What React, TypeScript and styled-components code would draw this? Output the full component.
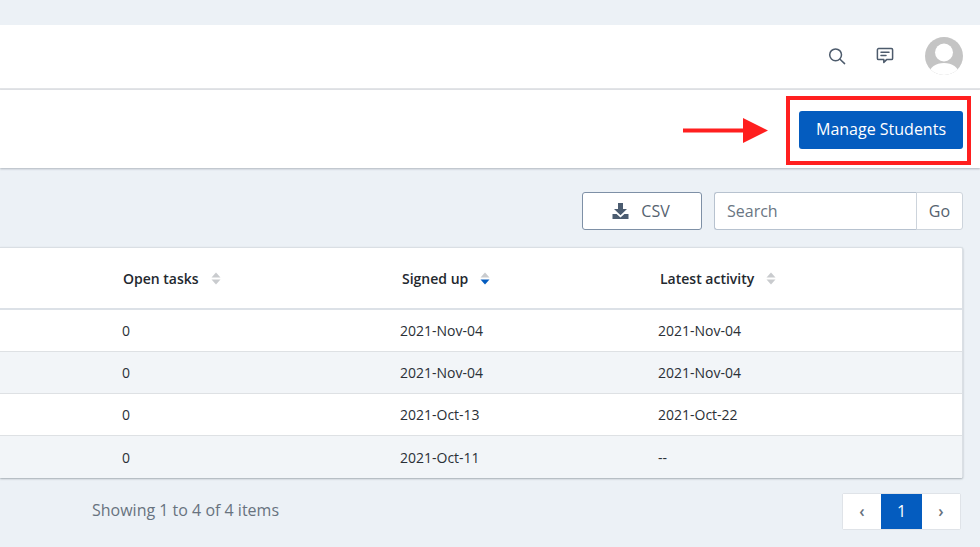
import React from 'react';
import styled, { createGlobalStyle } from 'styled-components';

const GlobalStyle = createGlobalStyle`
  html, body {
    margin: 0;
    padding: 0;
    height: 547px;
    overflow: hidden;
    background: #ecf1f6;
    font-family: 'Open Sans', 'Liberation Sans', sans-serif;
    -webkit-font-smoothing: antialiased;
  }
  * { box-sizing: border-box; }
`;

const Page = styled.div`
  width: 980px;
  height: 547px;
  padding-top: 25px;
  position: relative;
  overflow: hidden;
`;

const TopBar = styled.header`
  height: 65px;
  background: #fff;
  border-bottom: 2px solid #e2e4e7;
  display: flex;
  align-items: center;
  justify-content: flex-end;
  padding: 0 17px 2px 0;
`;

const IconButton = styled.span`
  display: flex;
  width: 20px;
  height: 20px;
  margin-right: 28px;
  color: #4d5b6c;
`;

const Avatar = styled.span`
  display: block;
  width: 38px;
  height: 38px;
  border-radius: 50%;
  overflow: hidden;
  margin-left: 2px;
`;

const ActionBar = styled.div`
  height: 78px;
  background: #fff;
  box-shadow: 0 1px 2px rgba(60, 70, 80, 0.35);
  display: flex;
  align-items: center;
  justify-content: flex-end;
  padding: 2px 17px 0 0;
`;

const ManageButton = styled.button`
  width: 164px;
  height: 38px;
  border: 0;
  border-radius: 3px;
  background: #045cbf;
  color: #fff;
  font: 500 16px 'Open Sans', sans-serif;
  padding: 0 0 3px;
`;

const Highlight = styled.div`
  position: absolute;
  left: 786px;
  top: 96px;
  width: 185px;
  height: 69px;
  border: 4px solid #ff1f1f;
`;

const Arrow = styled.svg`
  position: absolute;
  left: 683px;
  top: 117px;
`;

const Toolbar = styled.div`
  display: flex;
  justify-content: flex-end;
  padding: 24px 17px 17px 0;
`;

const CsvButton = styled.button`
  width: 120px;
  height: 38px;
  margin-right: 12px;
  background: #fff;
  border: 1px solid #7e90a6;
  border-radius: 3px;
  color: #55626f;
  font: 400 16px 'Open Sans', sans-serif;
  display: flex;
  align-items: center;
  justify-content: center;
  gap: 12px;
  padding: 0 2px 0 0;
`;

const SearchGroup = styled.div`
  display: flex;
  height: 38px;
`;

const SearchInput = styled.input`
  width: 203px;
  height: 38px;
  border: 1px solid #b7c2cf;
  border-right: 0;
  border-radius: 3px 0 0 3px;
  background: #fff;
  padding: 0 12px;
  font: 400 16px 'Open Sans', sans-serif;
  outline: none;

  &::placeholder {
    color: #6a7683;
    opacity: 1;
  }
`;

const GoButton = styled.button`
  width: 47px;
  height: 38px;
  margin-left: -1px;
  background: #fff;
  border: 1px solid #cdd4dc;
  border-radius: 0 3px 3px 0;
  color: #55626f;
  font: 400 16px 'Open Sans', sans-serif;
  padding: 0;
`;

const TableCard = styled.div`
  width: 963px;
  background: #fff;
  border-top: 1px solid #dadfe4;
  border-right: 1px solid #dadfe4;
  border-radius: 0 2px 2px 0;
  box-shadow: 0 1px 2px rgba(60, 70, 80, 0.4);
`;

const columns = 'grid-template-columns: 122px 278px 258px 1fr;';

const HeadRow = styled.div`
  display: grid;
  ${columns}
  height: 62px;
  align-items: center;
  border-bottom: 2px solid #dce1e7;
`;

const HeadCell = styled.div<{ $first?: boolean }>`
  display: flex;
  align-items: center;
  gap: 12px;
  padding-left: ${p => (p.$first ? '1px' : '2px')};
  font-size: 14px;
  font-weight: 600;
  color: #23282e;
  white-space: nowrap;
`;

const Row = styled.div<{ $striped?: boolean; $last?: boolean }>`
  display: grid;
  ${columns}
  height: 42px;
  align-items: center;
  font-size: 14px;
  color: #2a3036;
  background: ${p => (p.$striped ? '#f2f5f8' : '#fff')};
  border-bottom: ${p => (p.$last ? '0' : '1px solid #dee1e4')};
`;

const Footer = styled.div`
  display: flex;
  align-items: center;
  justify-content: space-between;
  padding: 15px 19px 0 92px;
`;

const Summary = styled.span`
  font-size: 16px;
  color: #68737f;
  padding-bottom: 3px;
`;

const Pager = styled.div`
  display: flex;
  height: 37px;
  border: 1px solid #dfe3e8;
  border-radius: 2px;
  background: #fff;
`;

const PagerItem = styled.span<{ $active?: boolean }>`
  display: flex;
  align-items: center;
  justify-content: center;
  width: ${p => (p.$active ? '41px' : '38px')};
  background: ${p => (p.$active ? '#045cbf' : '#fff')};
  color: ${p => (p.$active ? '#fff' : '#66717d')};
  font-size: 16px;
  font-weight: ${p => (p.$active ? 500 : 600)};
  padding-bottom: 2px;
`;

const SortIcon = ({ active }: { active?: boolean }) => (
  <svg width="10" height="13" viewBox="0 0 10 13" aria-hidden="true">
    <path d="M5 0.5 L9.5 5.5 H0.5 Z" fill="#c9cbce" />
    <path d="M0.5 7.5 H9.5 L5 12.5 Z" fill={active ? '#045cbf' : '#c9cbce'} />
  </svg>
);

const rows = [
  ['0', '2021-Nov-04', '2021-Nov-04'],
  ['0', '2021-Nov-04', '2021-Nov-04'],
  ['0', '2021-Oct-13', '2021-Oct-22'],
  ['0', '2021-Oct-11', '--'],
];

const App: React.FC = () => {
  return (
    <>
      <GlobalStyle />
      <Page>
        <TopBar>
          <IconButton>
            <svg width="20" height="20" viewBox="0 0 20 20" fill="none" stroke="currentColor" strokeWidth="1.5" strokeLinecap="round">
              <circle cx="8.6" cy="8.8" r="5.9" />
              <path d="M13 13.2 L17.6 17.6" />
            </svg>
          </IconButton>
          <IconButton>
            <svg width="20" height="20" viewBox="0 0 20 20" fill="none" stroke="currentColor" strokeWidth="1.5" strokeLinejoin="round" strokeLinecap="round">
              <path d="M3.6 2.6 H16.4 A1.2 1.2 0 0 1 17.6 3.8 V12.4 A1.2 1.2 0 0 1 16.4 13.6 H11.6 L8.8 16.4 V13.6 H3.6 A1.2 1.2 0 0 1 2.4 12.4 V3.8 A1.2 1.2 0 0 1 3.6 2.6 Z" />
              <path d="M6 6.2 H14 M6 9.6 H11" />
            </svg>
          </IconButton>
          <Avatar>
            <svg width="38" height="38" viewBox="0 0 38 38">
              <rect width="38" height="38" fill="#c4c4c4" />
              <circle cx="19" cy="15.5" r="9" fill="#fff" />
              <path d="M3 38 C4.5 30 11 26 19 26 C27 26 33.5 30 35 38 Z" fill="#fff" />
            </svg>
          </Avatar>
        </TopBar>
        <ActionBar>
          <ManageButton>Manage Students</ManageButton>
        </ActionBar>
        <Toolbar>
          <CsvButton>
            <svg width="17" height="16" viewBox="0 0 17 16" aria-hidden="true">
              <path d="M6 0 H11 V6 H15 L8.5 12.2 L2 6 H6 Z" fill="#4b5c70" />
              <path d="M0.5 11 H4.6 L8.5 14.6 L12.4 11 H16.5 V16 H0.5 Z" fill="#4b5c70" />
            </svg>
            CSV
          </CsvButton>
          <SearchGroup>
            <SearchInput placeholder="Search" />
            <GoButton>Go</GoButton>
          </SearchGroup>
        </Toolbar>
        <TableCard>
          <HeadRow>
            <div />
            <HeadCell $first>Open tasks <SortIcon /></HeadCell>
            <HeadCell>Signed up <SortIcon active /></HeadCell>
            <HeadCell>Latest activity <SortIcon /></HeadCell>
          </HeadRow>
          {rows.map((r, i) => (
            <Row key={i} $striped={i % 2 === 1} $last={i === rows.length - 1}>
              <div />
              <div>{r[0]}</div>
              <div>{r[1]}</div>
              <div>{r[2]}</div>
            </Row>
          ))}
        </TableCard>
        <Footer>
          <Summary>Showing 1 to 4 of 4 items</Summary>
          <Pager>
            <PagerItem>‹</PagerItem>
            <PagerItem $active>1</PagerItem>
            <PagerItem>›</PagerItem>
          </Pager>
        </Footer>
        <Arrow width="86" height="28" viewBox="0 0 86 28" aria-hidden="true">
          <path d="M0 11.5 H60 V1 L85 13.5 L60 26 V15.5 H0 Z" fill="#ff1f1f" />
        </Arrow>
        <Highlight />
      </Page>
    </>
  );
};

export default App;
